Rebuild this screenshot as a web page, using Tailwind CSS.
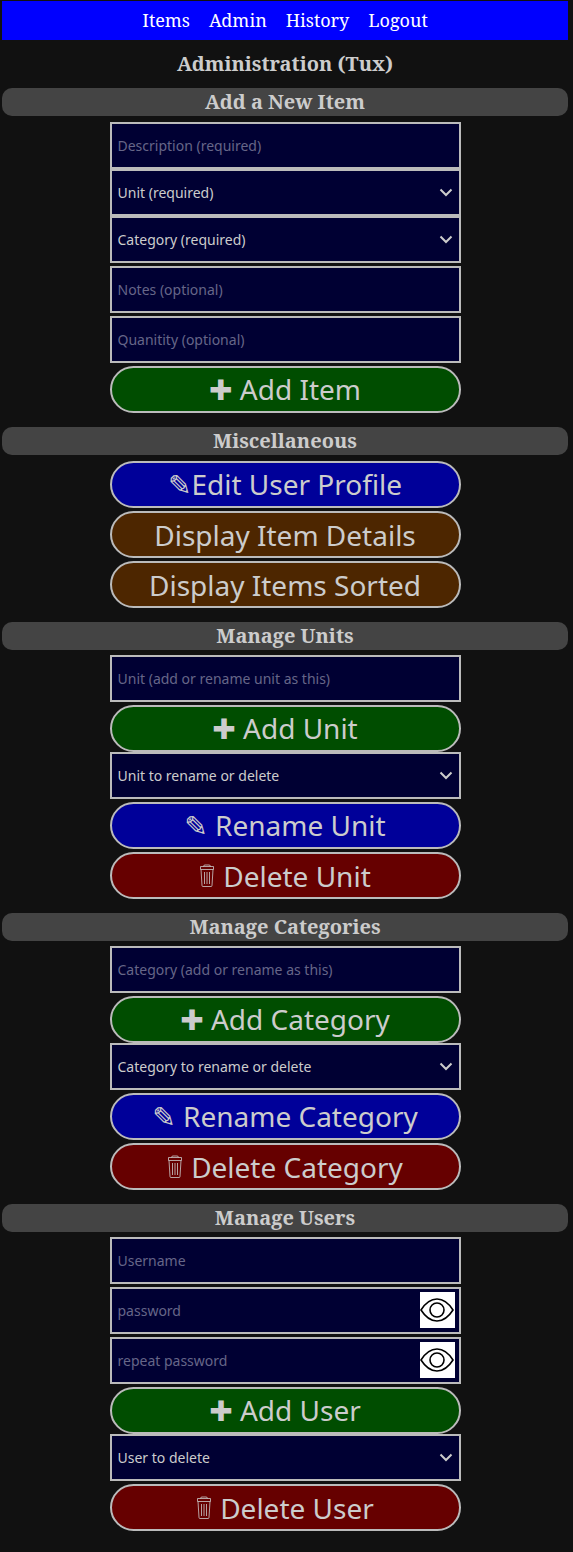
<!DOCTYPE html>
<html lang="en">
<head>
    <meta charset="UTF-8">
    <meta name="viewport" content="width=device-width, initial-scale=1.0">
    <title>Administration</title>
    <script src="https://cdn.jsdelivr.net/npm/@tailwindcss/browser@4"></script>
</head>
<body class="bg-[#111111] text-[#cccccc] font-['Noto_Sans',sans-serif]">
    <div class="w-[570px] pt-px pb-[23px]">
        <!-- Top nav -->
        <nav class="mx-[2px] h-[39px] bg-[#0000ff] flex items-center justify-center gap-[19px] text-[18px] text-white font-['Noto_Serif','DejaVu_Serif',serif]">
            <a href="#">Items</a>
            <a href="#">Admin</a>
            <a href="#">History</a>
            <a href="#">Logout</a>
        </nav>
        <h1 class="h-[48px] flex items-center justify-center text-[20px] font-bold font-['Noto_Serif','DejaVu_Serif',serif]">Administration (Tux)</h1>

        <!-- Add a New Item -->
        <h2 class="mx-[2px] h-[28px] rounded-[10px] bg-[#444444] flex items-center justify-center text-[20px] font-bold font-['Noto_Serif','DejaVu_Serif',serif]">Add a New Item</h2>
        <div class="w-[351px] mx-auto mt-[6px] flex flex-col">
            <input class="h-[47px] border-2 border-[#bbbbbb] bg-[#000033] px-[6px] text-[14px] placeholder:text-[#666688]" placeholder="Description (required)">
            <div class="relative h-[47px] border-2 border-[#bbbbbb] bg-[#000033] pl-[6px] flex items-center text-[14px]">Unit (required)
                <svg class="absolute right-[6px] top-[14px] w-[14px] h-[14px]" viewBox="0 0 14 14" fill="none" stroke="#cccccc" stroke-width="2"><path d="M1.5 4.5 7 10l5.5-5.5"/></svg>
            </div>
            <div class="relative h-[47px] border-2 border-[#bbbbbb] bg-[#000033] pl-[6px] flex items-center text-[14px]">Category (required)
                <svg class="absolute right-[6px] top-[14px] w-[14px] h-[14px]" viewBox="0 0 14 14" fill="none" stroke="#cccccc" stroke-width="2"><path d="M1.5 4.5 7 10l5.5-5.5"/></svg>
            </div>
            <input class="mt-[3px] h-[47px] border-2 border-[#bbbbbb] bg-[#000033] px-[6px] text-[14px] placeholder:text-[#666688]" placeholder="Notes (optional)">
            <input class="mt-[3px] h-[47px] border-2 border-[#bbbbbb] bg-[#000033] px-[6px] text-[14px] placeholder:text-[#666688]" placeholder="Quanitity (optional)">
            <button class="mt-[3px] h-[47px] rounded-full border-2 border-[#bbbbbb] bg-[#004d00] text-[28px] leading-none"><span class="font-['DejaVu_Sans']">✚</span> Add Item</button>
        </div>

        <!-- Miscellaneous -->
        <h2 class="mt-[14px] mx-[2px] h-[28px] bg-[#444444] rounded-[10px] flex items-center justify-center text-[20px] font-bold font-['Noto_Serif','DejaVu_Serif',serif]">Miscellaneous</h2>
        <div class="w-[351px] mx-auto mt-[6px] flex flex-col gap-[3px]">
            <button class="h-[47px] rounded-full border-2 border-[#bbbbbb] bg-[#000099] text-[28px] leading-none"><span class="font-['DejaVu_Sans']">✎</span>Edit User Profile</button>
            <button class="h-[47px] rounded-full border-2 border-[#bbbbbb] bg-[#4d2600] text-[28px] leading-none">Display Item Details</button>
            <button class="h-[47px] rounded-full border-2 border-[#bbbbbb] bg-[#4d2600] text-[28px] leading-none">Display Items Sorted</button>
        </div>

        <!-- Manage Units -->
        <h2 class="mt-[14px] mx-[2px] h-[28px] bg-[#444444] rounded-[10px] flex items-center justify-center text-[20px] font-bold font-['Noto_Serif','DejaVu_Serif',serif]">Manage Units</h2>
        <div class="w-[351px] mx-auto mt-[5px] flex flex-col">
            <input class="h-[47px] border-2 border-[#bbbbbb] bg-[#000033] px-[6px] text-[14px] placeholder:text-[#666688]" placeholder="Unit (add or rename unit as this)">
            <button class="mt-[3px] h-[47px] rounded-full border-2 border-[#bbbbbb] bg-[#004d00] text-[28px] leading-none"><span class="font-['DejaVu_Sans']">✚</span> Add Unit</button>
            <div class="relative h-[47px] border-2 border-[#bbbbbb] bg-[#000033] pl-[6px] flex items-center text-[14px]">Unit to rename or delete
                <svg class="absolute right-[6px] top-[14px] w-[14px] h-[14px]" viewBox="0 0 14 14" fill="none" stroke="#cccccc" stroke-width="2"><path d="M1.5 4.5 7 10l5.5-5.5"/></svg>
            </div>
            <button class="mt-[3px] h-[47px] rounded-full border-2 border-[#bbbbbb] bg-[#000099] text-[28px] leading-none"><span class="font-['DejaVu_Sans']">✎</span> Rename Unit</button>
            <button class="mt-[3px] h-[47px] rounded-full border-2 border-[#bbbbbb] bg-[#660000] text-[28px] leading-none inline-flex items-center justify-center gap-[8px]">
                <svg class="w-[16px] h-[24px]" viewBox="0 0 16 24" fill="none" stroke="#cccccc" stroke-width="0.8"><path d="M1.5 2.5h13v3h-13zM2 5.5l1 16q0 1 1 1h8q1 0 1-1l1-16M5.5 8v12M8 8v12M10.5 8v12M4.5 2.5q0-1.5 1.5-1.5h4q1.5 0 1.5 1.5"/></svg>
                Delete Unit
            </button>
        </div>

        <!-- Manage Categories -->
        <h2 class="mt-[14px] mx-[2px] h-[28px] bg-[#444444] rounded-[10px] flex items-center justify-center text-[20px] font-bold font-['Noto_Serif','DejaVu_Serif',serif]">Manage Categories</h2>
        <div class="w-[351px] mx-auto mt-[5px] flex flex-col">
            <input class="h-[47px] border-2 border-[#bbbbbb] bg-[#000033] px-[6px] text-[14px] placeholder:text-[#666688]" placeholder="Category (add or rename as this)">
            <button class="mt-[3px] h-[47px] rounded-full border-2 border-[#bbbbbb] bg-[#004d00] text-[28px] leading-none"><span class="font-['DejaVu_Sans']">✚</span> Add Category</button>
            <div class="relative h-[47px] border-2 border-[#bbbbbb] bg-[#000033] pl-[6px] flex items-center text-[14px]">Category to rename or delete
                <svg class="absolute right-[6px] top-[14px] w-[14px] h-[14px]" viewBox="0 0 14 14" fill="none" stroke="#cccccc" stroke-width="2"><path d="M1.5 4.5 7 10l5.5-5.5"/></svg>
            </div>
            <button class="mt-[3px] h-[47px] rounded-full border-2 border-[#bbbbbb] bg-[#000099] text-[28px] leading-none"><span class="font-['DejaVu_Sans']">✎</span> Rename Category</button>
            <button class="mt-[3px] h-[47px] rounded-full border-2 border-[#bbbbbb] bg-[#660000] text-[28px] leading-none inline-flex items-center justify-center gap-[8px]">
                <svg class="w-[16px] h-[24px]" viewBox="0 0 16 24" fill="none" stroke="#cccccc" stroke-width="0.8"><path d="M1.5 2.5h13v3h-13zM2 5.5l1 16q0 1 1 1h8q1 0 1-1l1-16M5.5 8v12M8 8v12M10.5 8v12M4.5 2.5q0-1.5 1.5-1.5h4q1.5 0 1.5 1.5"/></svg>
                Delete Category
            </button>
        </div>

        <!-- Manage Users -->
        <h2 class="mt-[14px] mx-[2px] h-[28px] bg-[#444444] rounded-[10px] flex items-center justify-center text-[20px] font-bold font-['Noto_Serif','DejaVu_Serif',serif]">Manage Users</h2>
        <div class="w-[351px] mx-auto mt-[5px] flex flex-col">
            <input class="h-[47px] border-2 border-[#bbbbbb] bg-[#000033] px-[6px] text-[14px] placeholder:text-[#666688]" placeholder="Username">
            <div class="relative mt-[3px] h-[47px] border-2 border-[#bbbbbb] bg-[#000033] pl-[6px] flex items-center text-[14px] text-[#666688]">password
                <span class="absolute right-[4px] top-[3px] w-[35px] h-[36px] bg-white flex items-center justify-center">
                    <svg class="w-[34px] h-[26px]" viewBox="0 0 34 26" fill="none" stroke="#000000" stroke-width="1.6"><path d="M1 13Q8 2 17 2t16 11Q26 24 17 24T1 13z"/><circle cx="17" cy="13" r="7"/></svg>
                </span>
            </div>
            <div class="relative mt-[3px] h-[47px] border-2 border-[#bbbbbb] bg-[#000033] pl-[6px] flex items-center text-[14px] text-[#666688]">repeat password
                <span class="absolute right-[4px] top-[3px] w-[35px] h-[36px] bg-white flex items-center justify-center">
                    <svg class="w-[34px] h-[26px]" viewBox="0 0 34 26" fill="none" stroke="#000000" stroke-width="1.6"><path d="M1 13Q8 2 17 2t16 11Q26 24 17 24T1 13z"/><circle cx="17" cy="13" r="7"/></svg>
                </span>
            </div>
            <button class="mt-[3px] h-[47px] rounded-full border-2 border-[#bbbbbb] bg-[#004d00] text-[28px] leading-none"><span class="font-['DejaVu_Sans']">✚</span> Add User</button>
            <div class="relative h-[47px] border-2 border-[#bbbbbb] bg-[#000033] pl-[6px] flex items-center text-[14px]">User to delete
                <svg class="absolute right-[6px] top-[14px] w-[14px] h-[14px]" viewBox="0 0 14 14" fill="none" stroke="#cccccc" stroke-width="2"><path d="M1.5 4.5 7 10l5.5-5.5"/></svg>
            </div>
            <button class="mt-[3px] h-[47px] rounded-full border-2 border-[#bbbbbb] bg-[#660000] text-[28px] leading-none inline-flex items-center justify-center gap-[8px]">
                <svg class="w-[16px] h-[24px]" viewBox="0 0 16 24" fill="none" stroke="#cccccc" stroke-width="0.8"><path d="M1.5 2.5h13v3h-13zM2 5.5l1 16q0 1 1 1h8q1 0 1-1l1-16M5.5 8v12M8 8v12M10.5 8v12M4.5 2.5q0-1.5 1.5-1.5h4q1.5 0 1.5 1.5"/></svg>
                Delete User
            </button>
        </div>
    </div>
</body>
</html>
